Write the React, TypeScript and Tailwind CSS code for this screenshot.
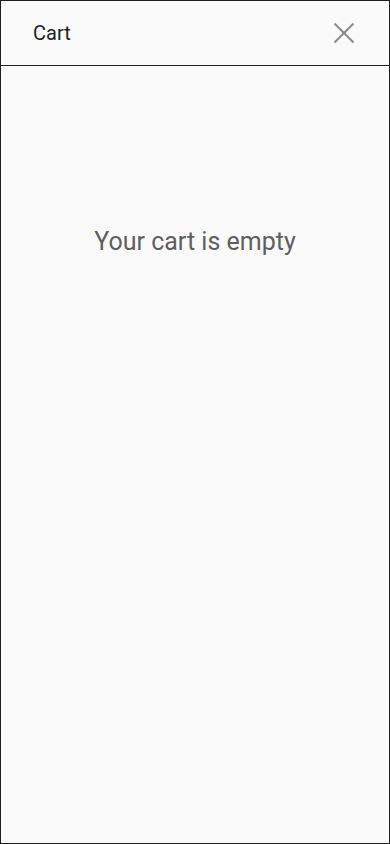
export default function App() {
  return (
    <div
      className="flex h-[844px] w-[390px] flex-col border border-[#1f1f1f] bg-[#fafafa]"
      style={{ fontFamily: "Roboto, 'Noto Sans', sans-serif" }}
    >
      <header className="flex h-[65px] shrink-0 items-center justify-between border-b border-[#1f1f1f] pl-8 pr-[33px]">
        <h1 className="text-[20px] leading-6 text-[#1f1f1f]">Cart</h1>
        <button
          aria-label="Close"
          className="flex h-6 w-6 items-center justify-center text-[#8a8a8a]"
          type="button"
        >
          <svg
            fill="none"
            height="22"
            stroke="currentColor"
            strokeWidth="2"
            viewBox="0 0 22 22"
            width="22"
          >
            <line x1="1.5" x2="20.5" y1="1.5" y2="20.5" />
            <line x1="20.5" x2="1.5" y1="1.5" y2="20.5" />
          </svg>
        </button>
      </header>
      <main className="flex flex-1 flex-col items-center pt-[160px]">
        <p className="text-[25px] leading-8 text-[#5f5f5f]">Your cart is empty</p>
      </main>
    </div>
  );
}
